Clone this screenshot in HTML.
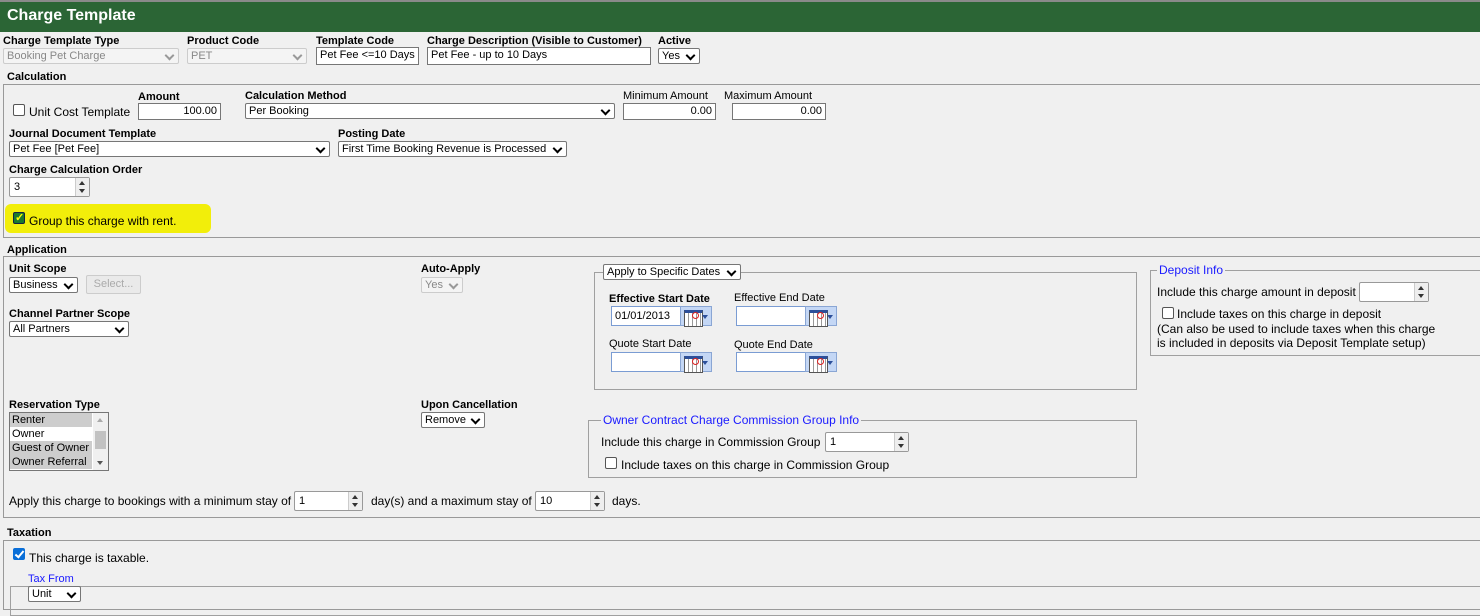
<!DOCTYPE html>
<html><head><meta charset="utf-8"><style>
*{box-sizing:border-box}
body{margin:0;width:1480px;height:606px;overflow:hidden;background:#f0f0f0;font-family:"Liberation Sans",Arial,sans-serif;font-size:11px;color:#000;position:relative}
.a{position:absolute;white-space:nowrap}
.b{font-weight:bold}
.hdr{position:absolute;left:0;top:0;width:1480px;height:32px;background:#2b6535;border-top:2px solid #8a8a8a}
.hdr span{position:absolute;left:7px;top:5px;color:#fff;font-weight:bold;font-size:16px}
.in{position:absolute;background:#fff;border:1px solid #767676;height:17px;padding:1px 3px;line-height:13px;font-size:11px;white-space:nowrap;overflow:hidden}
.sel{position:absolute;background:#fff;border:1px solid #767676;height:16px;padding:0 3px;line-height:14px;border-radius:2px;white-space:nowrap;overflow:hidden}
.sel:after{content:"";position:absolute;right:5px;top:3px;width:5px;height:5px;border-right:2px solid #000;border-bottom:2px solid #000;transform:rotate(45deg)}
.dis{color:#888;border-color:#ccc;background:#f4f4f4}
.dis:after{border-color:#999}
.box{position:absolute;border:1px solid #999;border-right:none}
.fs{position:absolute;border:1px solid #a0a0a0}
.leg{position:absolute;background:#f0f0f0;color:#1a1aff;padding:0 2px;font-size:11px}
.cb{position:absolute;width:12px;height:12px;border:1px solid #555;border-radius:2px;background:#fff}
.cbc{background:#0a6fd8;border-color:#0a6fd8}
.cbc:after{content:"";position:absolute;left:3px;top:0px;width:3px;height:7px;border-right:2px solid #fff;border-bottom:2px solid #fff;transform:rotate(40deg)}
.spin{position:absolute;background:#fff;border:1px solid #999;height:20px;border-radius:2px;padding:2px 4px;line-height:14px}
.spin i{position:absolute;right:0;top:0;width:14px;height:18px;background:#eee;border-left:1px solid #ccc}
.spin i:before{content:"";position:absolute;left:3px;top:3px;border:3.5px solid transparent;border-bottom:4px solid #333;border-top:none}
.spin i:after{content:"";position:absolute;left:3px;bottom:3px;border:3.5px solid transparent;border-top:4px solid #333;border-bottom:none}
.cal{position:absolute;width:32px;height:20px;background:#c4d7f5;border:1px solid #8aa6d4}
.cal:before{content:"";position:absolute;left:3px;top:3px;width:17px;height:13px;border:1px solid #555;border-top:3px solid #2c4f9a;background:repeating-linear-gradient(90deg,#fff 0 3px,#999 3px 4px)}
.cal:after{content:"";position:absolute;right:3px;top:8px;border:3px solid transparent;border-top:4px solid #2c4f9a}
.red{position:absolute;width:7px;height:7px;border:1.5px solid #d22;border-radius:50%;z-index:2}
</style></head><body>
<div class="hdr"><span>Charge Template</span></div>

<div class="a b" style="left:3px;top:35px">Charge Template Type</div>
<div class="a b" style="left:187px;top:35px">Product Code</div>
<div class="a b" style="left:316px;top:35px">Template Code</div>
<div class="a b" style="left:427px;top:35px">Charge Description (Visible to Customer)</div>
<div class="a b" style="left:658px;top:35px">Active</div>
<div class="sel dis" style="left:3px;top:48px;width:176px">Booking Pet Charge</div>
<div class="sel dis" style="left:187px;top:48px;width:120px">PET</div>
<div class="in" style="left:316px;top:47px;width:103px;height:18px">Pet Fee &lt;=10 Days</div>
<div class="in" style="left:427px;top:47px;width:224px;height:18px">Pet Fee - up to 10 Days</div>
<div class="sel" style="left:658px;top:48px;width:42px">Yes</div>

<div class="a b" style="left:7px;top:71px">Calculation</div>
<div class="box" style="left:3px;top:84px;width:1477px;height:154px"></div>
<div class="cb" style="left:13px;top:104px"></div>
<div class="a" style="left:29px;top:105px;font-size:12px">Unit Cost Template</div>
<div class="a b" style="left:138px;top:91px">Amount</div>
<div class="in" style="left:138px;top:103px;width:83px;text-align:right">100.00</div>
<div class="a b" style="left:245px;top:90px">Calculation Method</div>
<div class="sel" style="left:245px;top:103px;width:370px">Per Booking</div>
<div class="a" style="left:623px;top:90px">Minimum Amount</div>
<div class="in" style="left:623px;top:103px;width:93px;text-align:right">0.00</div>
<div class="a" style="left:724px;top:90px">Maximum Amount</div>
<div class="in" style="left:732px;top:103px;width:94px;text-align:right">0.00</div>
<div class="a b" style="left:9px;top:128px">Journal Document Template</div>
<div class="sel" style="left:9px;top:141px;width:321px">Pet Fee [Pet Fee]</div>
<div class="a b" style="left:338px;top:128px">Posting Date</div>
<div class="sel" style="left:338px;top:141px;width:229px">First Time Booking Revenue is Processed</div>
<div class="a b" style="left:9px;top:164px">Charge Calculation Order</div>
<div class="spin" style="left:9px;top:177px;width:81px">3<i></i></div>
<div class="a" style="left:5px;top:204px;width:206px;height:29px;background:#f2ee0a;border-radius:6px"></div>
<div class="cb" style="left:13px;top:212px;background:#1c7a2e;border-color:#124;"></div>
<div class="a" style="left:15px;top:211px;color:#ff0;font-size:11px;font-weight:bold">✓</div>
<div class="a" style="left:29px;top:214px;font-size:12px">Group this charge with rent.</div>

<div class="a b" style="left:7px;top:244px">Application</div>
<div class="box" style="left:3px;top:256px;width:1477px;height:262px"></div>
<div class="a b" style="left:9px;top:263px">Unit Scope</div>
<div class="sel" style="left:9px;top:277px;width:69px">Business</div>
<div class="a" style="left:86px;top:275px;width:55px;height:19px;border:1px solid #ccc;border-radius:2px;background:#eaeaea;color:#aaa;text-align:center;line-height:17px">Select...</div>
<div class="a b" style="left:421px;top:263px">Auto-Apply</div>
<div class="sel dis" style="left:421px;top:277px;width:42px">Yes</div>
<div class="a b" style="left:9px;top:308px">Channel Partner Scope</div>
<div class="sel" style="left:9px;top:321px;width:120px">All Partners</div>

<div class="fs" style="left:594px;top:272px;width:543px;height:118px"></div>
<div class="sel" style="left:603px;top:264px;width:138px;background:#fff;z-index:2">Apply to Specific Dates</div>
<div class="a b" style="left:609px;top:293px">Effective Start Date</div>
<div class="a" style="left:734px;top:292px">Effective End Date</div>
<div class="in" style="left:611px;top:306px;width:70px;height:20px;border-color:#7a9cd3;padding-top:3px">01/01/2013</div>
<div class="cal" style="left:680px;top:306px"></div><div class="red" style="left:692px;top:312px"></div>
<div class="in" style="left:736px;top:306px;width:70px;height:20px;border-color:#7a9cd3"></div>
<div class="cal" style="left:805px;top:306px"></div><div class="red" style="left:817px;top:312px"></div>
<div class="a" style="left:609px;top:338px">Quote Start Date</div>
<div class="a" style="left:734px;top:339px">Quote End Date</div>
<div class="in" style="left:611px;top:352px;width:70px;height:20px;border-color:#7a9cd3"></div>
<div class="cal" style="left:680px;top:352px"></div><div class="red" style="left:692px;top:358px"></div>
<div class="in" style="left:736px;top:352px;width:70px;height:20px;border-color:#7a9cd3"></div>
<div class="cal" style="left:805px;top:352px"></div><div class="red" style="left:817px;top:358px"></div>

<div class="fs" style="left:1150px;top:270px;width:340px;height:86px"></div>
<div class="leg" style="left:1157px;top:263px;font-size:12px">Deposit Info</div>
<div class="a" style="left:1157px;top:285px;font-size:12px">Include this charge amount in deposit</div>
<div class="spin" style="left:1359px;top:282px;width:70px"><i></i></div>
<div class="cb" style="left:1162px;top:307px"></div>
<div class="a" style="left:1177px;top:307px;font-size:12px">Include taxes on this charge in deposit</div>
<div class="a" style="left:1157px;top:322px;font-size:12px">(Can also be used to include taxes when this charge</div>
<div class="a" style="left:1157px;top:336px;font-size:12px">is included in deposits via Deposit Template setup)</div>

<div class="a b" style="left:9px;top:399px">Reservation Type</div>
<div class="a" style="left:9px;top:412px;width:100px;height:59px;border:1px solid #767676;background:#fff;line-height:14px">
<div style="background:#cdcdcd;width:82px;padding-left:2px">Renter</div>
<div style="width:82px;padding-left:2px">Owner</div>
<div style="background:#cdcdcd;width:82px;padding-left:2px">Guest of Owner</div>
<div style="background:#cdcdcd;width:82px;padding-left:2px">Owner Referral</div>
<div style="position:absolute;right:0;top:0;width:15px;height:57px;background:#f0f0f0"><div style="position:absolute;left:2px;top:18px;width:11px;height:18px;background:#c2c2c2"></div>
<div style="position:absolute;left:4px;top:5px;border:3.5px solid transparent;border-bottom:4px solid #aaa;border-top:none"></div>
<div style="position:absolute;left:4px;bottom:5px;border:3.5px solid transparent;border-top:4px solid #555;border-bottom:none"></div></div>
</div>
<div class="a b" style="left:421px;top:399px">Upon Cancellation</div>
<div class="sel" style="left:421px;top:412px;width:64px">Remove</div>

<div class="fs" style="left:588px;top:420px;width:549px;height:58px"></div>
<div class="leg" style="left:601px;top:413px;font-size:12px">Owner Contract Charge Commission Group Info</div>
<div class="a" style="left:601px;top:435px;font-size:12px">Include this charge in Commission Group</div>
<div class="spin" style="left:825px;top:432px;width:84px">1<i></i></div>
<div class="cb" style="left:605px;top:457px"></div>
<div class="a" style="left:621px;top:458px;font-size:12px">Include taxes on this charge in Commission Group</div>

<div class="a" style="left:9px;top:494px;font-size:12px">Apply this charge to bookings with a minimum stay of</div>
<div class="spin" style="left:294px;top:491px;width:69px">1<i></i></div>
<div class="a" style="left:371px;top:494px;font-size:12px">day(s) and a maximum stay of</div>
<div class="spin" style="left:535px;top:491px;width:70px">10<i></i></div>
<div class="a" style="left:612px;top:494px;font-size:12px">days.</div>

<div class="a b" style="left:7px;top:527px">Taxation</div>
<div class="box" style="left:3px;top:540px;width:1477px;height:70px"></div>
<div class="cb cbc" style="left:13px;top:548px"></div>
<div class="a" style="left:29px;top:551px;font-size:12px">This charge is taxable.</div>
<div class="fs" style="left:10px;top:586px;width:1475px;height:30px"></div>
<div class="leg" style="left:26px;top:573px;font-size:11px">Tax From</div>
<div class="sel" style="left:28px;top:586px;width:53px;z-index:2">Unit</div>
</body></html>
